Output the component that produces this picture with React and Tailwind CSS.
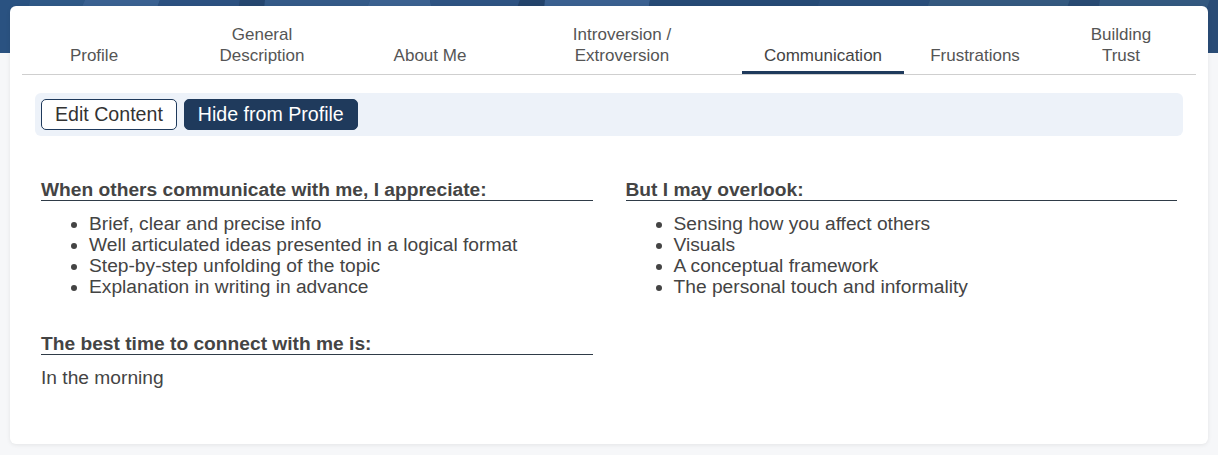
import React from "react";

const tabs = [
  { label: ["Profile"], w: "w-[144px]" },
  { label: ["General", "Description"], w: "w-[192px]" },
  { label: ["About Me"], w: "w-[144px]" },
  { label: ["Introversion /", "Extroversion"], w: "w-[240px]" },
  { label: ["Communication"], w: "w-[162px]", active: true },
  { label: ["Frustrations"], w: "w-[142px]" },
  { label: ["Building", "Trust"], w: "w-[150px]" },
];

function Band() {
  return (
    <svg
      className="absolute left-0 top-0 w-full h-[53px]"
      viewBox="0 0 1218 53"
      preserveAspectRatio="none"
    >
      <rect x="0" y="0" width="1218" height="53" fill="#284d79" />
      <polygon points="0,0 30,0 18,53 0,53" fill="#2a5281" />
      <polygon points="30,0 85,0 60,53 18,53" fill="#2f5886" />
      <polygon points="85,0 160,0 140,53 60,53" fill="#3a6191" />
      <polygon points="160,0 240,0 230,53 140,53" fill="#2c5180" />
      <polygon points="240,0 265,0 260,53 230,53" fill="#25466f" />
      <polygon points="265,0 370,0 350,53 260,53" fill="#345a88" />
      <polygon points="370,0 430,0 440,53 350,53" fill="#3b6190" />
      <polygon points="430,0 520,0 500,53 440,53" fill="#2e5382" />
      <polygon points="520,0 545,0 540,53 500,53" fill="#23436b" />
      <polygon points="545,0 650,0 640,53 540,53" fill="#3a6090" />
      <polygon points="650,0 820,0 800,53 640,53" fill="#264a75" />
      <polygon points="820,0 930,0 910,53 800,53" fill="#2a4e7a" />
      <polygon points="930,0 1070,0 1050,53 910,53" fill="#34597f" />
      <polygon points="1070,0 1100,0 1090,53 1050,53" fill="#284a72" />
      <polygon points="1100,0 1210,0 1190,53 1090,53" fill="#33587f" />
      <polygon points="1210,0 1218,0 1218,53 1190,53" fill="#2a4c76" />
    </svg>
  );
}

export default function App() {
  return (
    <div
      className="relative min-h-[455px] bg-[#f6f7f9] pt-[6px] px-[10px] pb-[12px] text-[#444]"
      style={{ fontFamily: '"Liberation Sans", Arial, sans-serif' }}
    >
      <Band />
      <div className="relative bg-white rounded-[6px] shadow-[0_1px_4px_rgba(0,0,0,0.08)] pt-[18px] px-[12px] pb-[56px]">
        {/* Tabs */}
        <div className="flex items-end border-b border-[#cfcfcf]">
          {tabs.map((t, i) => (
            <div
              key={i}
              className={`${t.w} shrink-0 text-center text-[17px] leading-[21px] pb-[5px] border-b-[3px] ${
                t.active ? "border-[#1f3a5c] text-[#444]" : "border-transparent text-[#555]"
              }`}
            >
              {t.label.map((l, j) => (
                <div key={j}>{l}</div>
              ))}
            </div>
          ))}
        </div>

        {/* Body */}
        <div className="px-[19px] pt-[18px]">
          <div className="-mx-[6px] flex gap-[7px] bg-[#edf2f9] rounded-[6px] p-[6px]">
            <button className="border border-[#1f3a5c] bg-white text-[#333] rounded-[5px] px-[13px] py-[4px] text-[19.6px] leading-[21px]">
              Edit Content
            </button>
            <button className="border border-[#1f3a5c] bg-[#1f3a5c] text-white rounded-[5px] px-[13px] py-[4px] text-[19.6px] leading-[21px]">
              Hide from Profile
            </button>
          </div>

          <div className="grid grid-cols-2 gap-[33px] mt-[43px] text-[19.2px] leading-[21px]">
            <div>
              <h3 className="font-bold text-[#444] border-b border-[#2f3b47]">
                When others communicate with me, I appreciate:
              </h3>
              <ul className="list-disc pl-[48px] mt-[12px]">
                <li>Brief, clear and precise info</li>
                <li>Well articulated ideas presented in a logical format</li>
                <li>Step-by-step unfolding of the topic</li>
                <li>Explanation in writing in advance</li>
              </ul>
              <h3 className="font-bold text-[#444] border-b border-[#2f3b47] mt-[36px]">
                The best time to connect with me is:
              </h3>
              <p className="mt-[12px]">In the morning</p>
            </div>
            <div>
              <h3 className="font-bold text-[#444] border-b border-[#2f3b47]">
                But I may overlook:
              </h3>
              <ul className="list-disc pl-[48px] mt-[12px]">
                <li>Sensing how you affect others</li>
                <li>Visuals</li>
                <li>A conceptual framework</li>
                <li>The personal touch and informality</li>
              </ul>
            </div>
          </div>
        </div>
      </div>
    </div>
  );
}
